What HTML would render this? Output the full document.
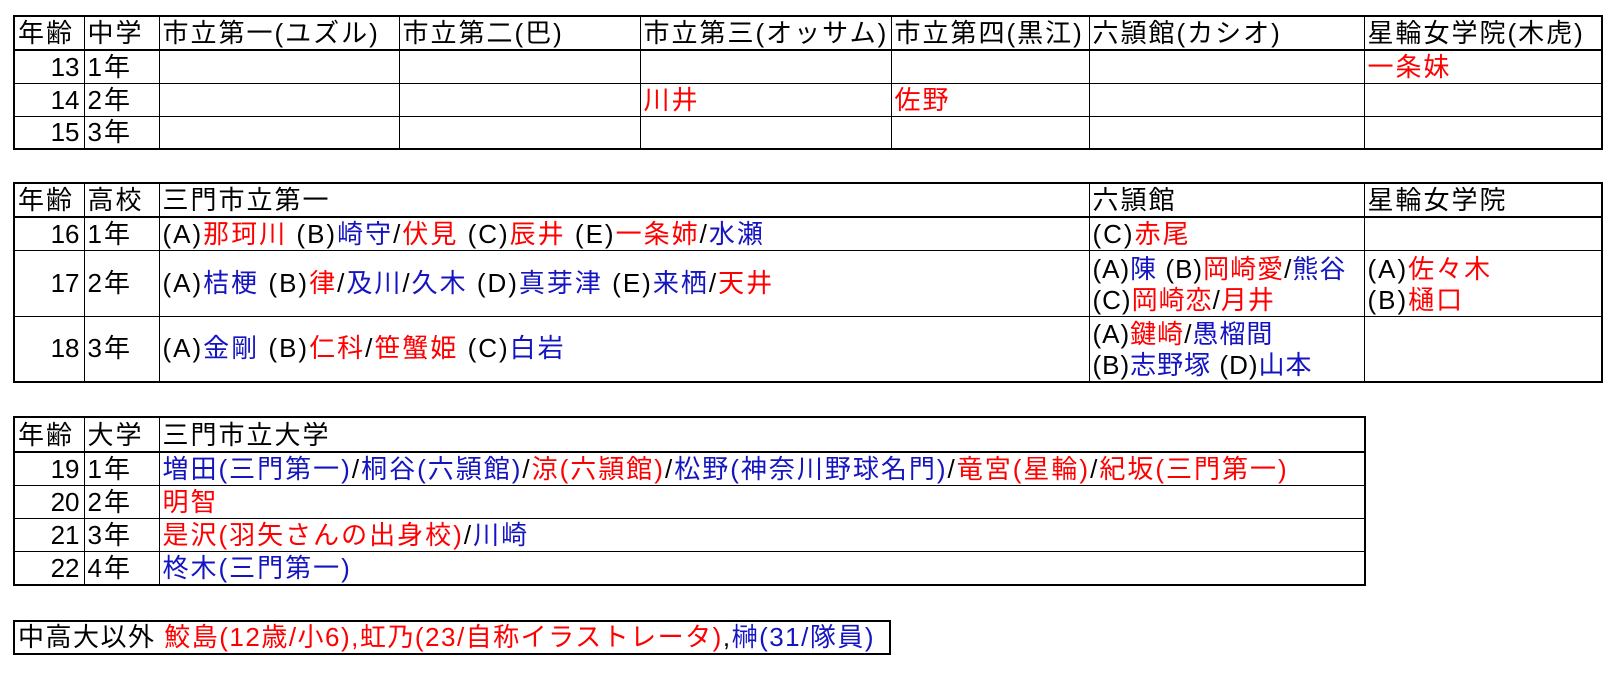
<!DOCTYPE html>
<html><head><meta charset="utf-8"><style>
body{margin:0;background:#fff;width:1604px;height:680px;overflow:hidden;position:relative;font-family:"Liberation Sans","Noto Sans CJK JP",sans-serif;font-size:26px;letter-spacing:2px;color:#000}
table{position:absolute;left:13px;border-collapse:collapse;table-layout:fixed;border:2px solid #000}
td{border:1px solid #000;padding:0 0 0 3px;white-space:nowrap;overflow:hidden;line-height:31px;vertical-align:bottom}
tr.h td{border-bottom:2px solid #000}
td.n{text-align:right;padding:0 4px 0 0;letter-spacing:0}
.r{color:#f00}.b{color:#1414c0}
</style></head><body>
<table style="top:15px;width:1588px">
<colgroup><col style="width:70px"><col style="width:75px"><col style="width:240px"><col style="width:241px"><col style="width:251px"><col style="width:198px"><col style="width:275px"><col style="width:238px"></colgroup>
<tr class="h" style="height:34px"><td>年齢</td><td>中学</td><td>市立第一(ユズル)</td><td>市立第二(巴)</td><td>市立第三(オッサム)</td><td>市立第四(黒江)</td><td>六頴館(カシオ)</td><td>星輪女学院(木虎)</td></tr>
<tr style="height:33px"><td class="n">13</td><td>1年</td><td></td><td></td><td></td><td></td><td></td><td class="r">一条妹</td></tr>
<tr style="height:33px"><td class="n">14</td><td>2年</td><td></td><td></td><td class="r">川井</td><td class="r">佐野</td><td></td><td></td></tr>
<tr style="height:33px"><td class="n">15</td><td>3年</td><td></td><td></td><td></td><td></td><td></td><td></td></tr>
</table>
<table style="top:182px;width:1588px">
<colgroup><col style="width:70px"><col style="width:75px"><col style="width:930px"><col style="width:275px"><col style="width:238px"></colgroup>
<tr class="h" style="height:34px"><td>年齢</td><td>高校</td><td>三門市立第一</td><td>六頴館</td><td>星輪女学院</td></tr>
<tr style="height:33px"><td class="n">16</td><td>1年</td><td>(A)<span class="r">那珂川</span> (B)<span class="b">崎守</span>/<span class="r">伏見</span> (C)<span class="r">辰井</span> (E)<span class="r">一条姉</span>/<span class="b">水瀬</span></td><td>(C)<span class="r">赤尾</span></td><td></td></tr>
<tr style="height:66px"><td class="n" style="vertical-align:middle">17</td><td style="vertical-align:middle">2年</td><td style="vertical-align:middle">(A)<span class="b">桔梗</span> (B)<span class="r">律</span>/<span class="b">及川</span>/<span class="b">久木</span> (D)<span class="b">真芽津</span> (E)<span class="b">来栖</span>/<span class="r">天井</span></td><td style="letter-spacing:1px">(A)<span class="b">陳</span> (B)<span class="r">岡崎愛</span>/<span class="b">熊谷</span><br>(C)<span class="r">岡崎恋</span>/<span class="r">月井</span></td><td>(A)<span class="r">佐々木</span><br>(B)<span class="r">樋口</span></td></tr>
<tr style="height:66px"><td class="n" style="vertical-align:middle">18</td><td style="vertical-align:middle">3年</td><td style="vertical-align:middle">(A)<span class="b">金剛</span> (B)<span class="r">仁科</span>/<span class="r">笹蟹姫</span> (C)<span class="b">白岩</span></td><td style="letter-spacing:1px">(A)<span class="r">鍵崎</span>/<span class="b">愚榴間</span><br>(B)<span class="b">志野塚</span> (D)<span class="b">山本</span></td><td></td></tr>
</table>
<table style="top:416px;width:1351px">
<colgroup><col style="width:70px"><col style="width:75px"><col style="width:1206px"></colgroup>
<tr class="h" style="height:35px"><td>年齢</td><td>大学</td><td>三門市立大学</td></tr>
<tr style="height:33px"><td class="n">19</td><td>1年</td><td><span class="b">増田(三門第一)</span>/<span class="b">桐谷(六頴館)</span>/<span class="r">涼(六頴館)</span>/<span class="b">松野(神奈川野球名門)</span>/<span class="r">竜宮(星輪)</span>/<span class="r">紀坂(三門第一)</span></td></tr>
<tr style="height:33px"><td class="n">20</td><td>2年</td><td class="r">明智</td></tr>
<tr style="height:33px"><td class="n">21</td><td>3年</td><td><span class="r">是沢(羽矢さんの出身校)</span>/<span class="b">川崎</span></td></tr>
<tr style="height:34px"><td class="n">22</td><td>4年</td><td class="b">柊木(三門第一)</td></tr>
</table>
<table style="top:620px;width:878px">
<tr style="height:32px"><td style="letter-spacing:1.5px">中高大以外 <span class="r">鮫島(12歳/小6),虹乃(23/自称イラストレータ)</span>,<span class="b">榊(31/隊員)</span></td></tr>
</table>
</body></html>
